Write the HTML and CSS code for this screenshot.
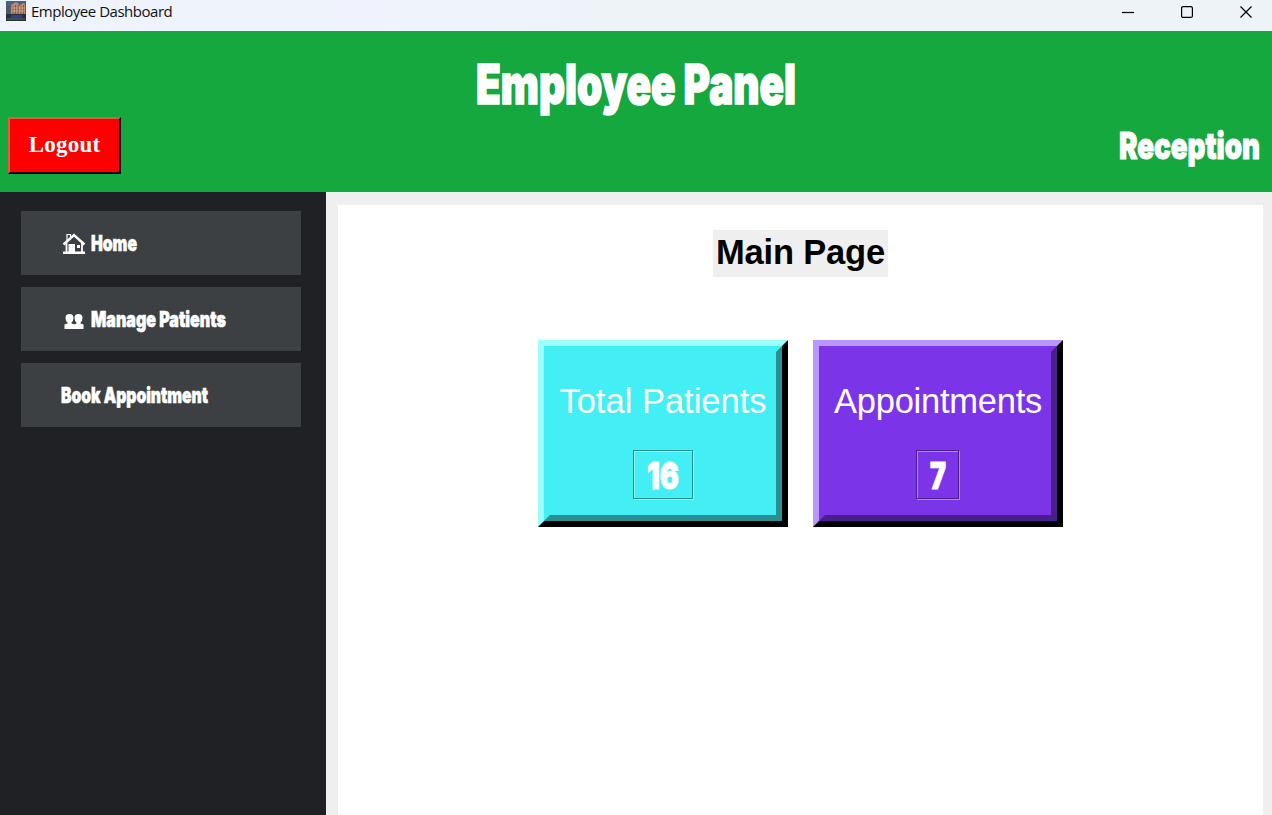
FILE: index.html
```html
<!DOCTYPE html>
<html lang="en">
<head>
<meta charset="utf-8">
<title>Employee Dashboard</title>
<link rel="stylesheet" href="styles.css">
</head>
<body>
<div class="window">
  <div class="titlebar">
    <svg class="app-icon" viewBox="0 0 20 20">
      <rect width="20" height="20" fill="#46618a"/>
      <path d="M0 4l5-2v13H0z" fill="#59606b"/>
      <path d="M5 4l5-3 3 2v12H5z" fill="#b58a76"/>
      <path d="M13 5l4-3 2 1v12h-6z" fill="#c58a66"/>
      <path d="M1 5v9M3 4v10M7 5v9M9.500 4v10M12 4v10M15 5v9M17.500 4v10" stroke="#4c4650" stroke-width=".7" fill="none"/>
      <path d="M6 7h6M6 10h6M13 7h5M13 10h5" stroke="#e0b08a" stroke-width=".8"/>
      <rect y="13" width="20" height="7" fill="#25313a"/>
      <rect x="5" y="14" width="11" height="3" fill="#1d4a98"/>
      <path d="M1 18h18" stroke="#776346"/>
    </svg>
    <span class="window-title">Employee Dashboard</span>
    <div class="controls">
      <svg viewBox="0 0 14 14"><path d="M1 7.500h12"/></svg>
      <svg viewBox="0 0 14 14"><rect x="1.600" y="1.600" width="10.800" height="10.800" rx="1.500"/></svg>
      <svg viewBox="0 0 14 14"><path d="M1.500 1.500l11 11M12.500 1.500l-11 11"/></svg>
    </div>
  </div>
  <header class="header">
    <svg class="heading" width="324" height="55"><text x="0" y="42" textLength="320" lengthAdjust="spacingAndGlyphs">Employee Panel</text></svg>
    <div class="header-row">
      <button class="logout">Logout</button>
      <svg class="role" width="150" height="50"><text x="1" y="32" textLength="141" lengthAdjust="spacingAndGlyphs">Reception</text></svg>
    </div>
  </header>
  <div class="body">
    <nav class="sidebar">
      <div class="nav-item with-icon">
        <svg class="nav-icon" viewBox="0 0 24 24">
          <path d="M5 9V3.500h3.500V6" fill="none" stroke="#fff" stroke-width="1.200"/>
          <path d="M1.500 13.500L12 4 22.500 13.500" fill="none" stroke="#fff" stroke-width="2.400"/>
          <path d="M4.500 12v9M20 12v9" stroke="#fff" stroke-width="1.800"/>
          <path d="M6.500 13h6.500v9H6.500zM15 14h3v3h-3zM1 20.500h22v2.500H1z" fill="#fff"/>
        </svg>
        <svg class="nav-text" width="46" height="28"><text x="0" y="22" textLength="46" lengthAdjust="spacingAndGlyphs">Home</text></svg>
      </div>
      <div class="nav-item with-icon">
        <svg class="nav-icon" viewBox="0 0 24 24">
          <g fill="#fff">
            <path d="M3.500 11q0-4 4-4t4 4q0 3-2 4.500v1l3 1v4.500H2.500v-4.500l3-1v-1q-2-1.500-2-4.500z"/>
            <path d="M12.500 11q0-4 4-4t4 4q0 3-2 4.500v1l3 1v4.500H12v-4.500l2.500-1v-1q-2-1.500-2-4.500z"/>
          </g>
        </svg>
        <svg class="nav-text" width="135" height="28"><text x="0" y="22" textLength="135" lengthAdjust="spacingAndGlyphs">Manage Patients</text></svg>
      </div>
      <div class="nav-item">
        <svg class="nav-text" width="147" height="28"><text x="0" y="22" textLength="147" lengthAdjust="spacingAndGlyphs">Book Appointment</text></svg>
      </div>
    </nav>
    <main class="main">
      <section class="page">
        <h1 class="page-title">Main Page</h1>
        <div class="cards">
          <div class="card patients">
            <div class="card-inner">
              <div class="label">Total Patients</div>
              <div class="count wide"><svg width="32" height="46"><text x="0" y="38" textLength="32" lengthAdjust="spacingAndGlyphs">16</text></svg></div>
            </div>
          </div>
          <div class="card appointments">
            <div class="card-inner">
              <div class="label tight">Appointments</div>
              <div class="count"><svg width="16" height="46"><text x="0" y="38" textLength="16" lengthAdjust="spacingAndGlyphs">7</text></svg></div>
            </div>
          </div>
        </div>
      </section>
    </main>
  </div>
</div>
</body>
</html>
```
FILE: styles.css
```css
* { box-sizing: border-box; }
body { margin: 0; overflow: hidden; font-family: "Liberation Sans", Arial, sans-serif; }
svg { display: block; flex: none; overflow: visible; }
svg text { font-family: Impact, Inter, sans-serif; font-weight: 900; fill: #fff; stroke: #fff; stroke-width: 0.6px; }
.window { width: 1272px; height: 815px; display: flex; flex-direction: column; }

.titlebar { height: 31px; flex: none; display: flex; align-items: flex-start; padding: 1px 19px 0 6px; background: linear-gradient(90deg, #eff3fc 0, #f0f3fd 30%, #eef3f8 50%, #eef3f7 100%); }
.app-icon { width: 20px; height: 20px; }
.window-title { margin-left: 5px; font: 15px/21px "Open Sans", "Noto Sans", sans-serif; letter-spacing: -0.48px; color: #111; white-space: nowrap; }
.controls { margin-left: auto; display: flex; gap: 45px; padding-top: 4px; }
.controls svg { width: 14px; height: 14px; fill: none; stroke: #000; stroke-width: 1.2; }

.header { height: 161px; flex: none; background: #14a83f; padding: 31px 13px 0 8px; display: flex; flex-direction: column; }
.heading { margin-left: 468px; }
.heading text { font-size: 55px; stroke-width: 1.6px; }
.header-row { display: flex; justify-content: space-between; }
.logout { width: 113px; height: 57px; padding: 0 0 1px; background: #f00; color: #fff; border: 2px solid; border-color: #d0643c #190000 #190000 #d0643c; font: bold 23px "Liberation Serif", serif; letter-spacing: 0.2px; }
.role { margin: 10px -9px 0 0; }
.role text { font-size: 37px; stroke-width: 1px; }

.body { flex: 1; display: flex; min-height: 0; }
.sidebar { width: 326px; background: #202124; padding: 19px 25px 0 21px; display: flex; flex-direction: column; gap: 12px; }
.nav-item { height: 64px; flex: none; background: #3c4043; display: flex; align-items: center; padding-left: 40px; }
.with-icon { gap: 5px; padding-left: 41px; }
.nav-icon { width: 24px; height: 24px; }
.nav-text text { font-size: 22px; }

.main { flex: 1; background: #efefef; padding: 13px 9px 0 12px; display: flex; }
.page { flex: 1; background: #fff; display: flex; flex-direction: column; align-items: center; padding-top: 25px; }
.page-title { margin: 0; width: 175px; height: 47px; background: #efefef; font-size: 34.5px; line-height: 45px; letter-spacing: -0.2px; text-align: center; white-space: nowrap; }
.cards { display: flex; gap: 25px; margin-top: 63px; }
.card { width: 250px; height: 187px; border: 6px solid; }
.card-inner { height: 100%; border: 6px solid; display: flex; flex-direction: column; align-items: center; padding: 29px 1px 0 0; }
.patients { border-color: #9ff #000 #000 #9ff; background: #43eef5; }
.patients .card-inner { border-color: #43eef5 #288f93 #288f93 #43eef5; }
.appointments { border-color: #ba96ff #000 #000 #ba96ff; background: #7c34e8; }
.appointments .card-inner { border-color: #7c34e8 #4a1f8b #4a1f8b #7c34e8; }
.label { color: #fff; font-size: 34.5px; line-height: 41px; white-space: nowrap; margin-left: 1px; }
.tight { letter-spacing: -0.25px; }
.count { width: 43px; height: 49px; margin-top: 28px; display: flex; justify-content: center; border: 1px solid; box-shadow: inset 1px 1px #fff6, 1px 1px #fff6; }
.wide { width: 60px; }
.count text { font-size: 37px; stroke-width: 1px; }
.patients .count { border-color: #288f93; }
.appointments .count { border-color: #4a1f8b; }
```
